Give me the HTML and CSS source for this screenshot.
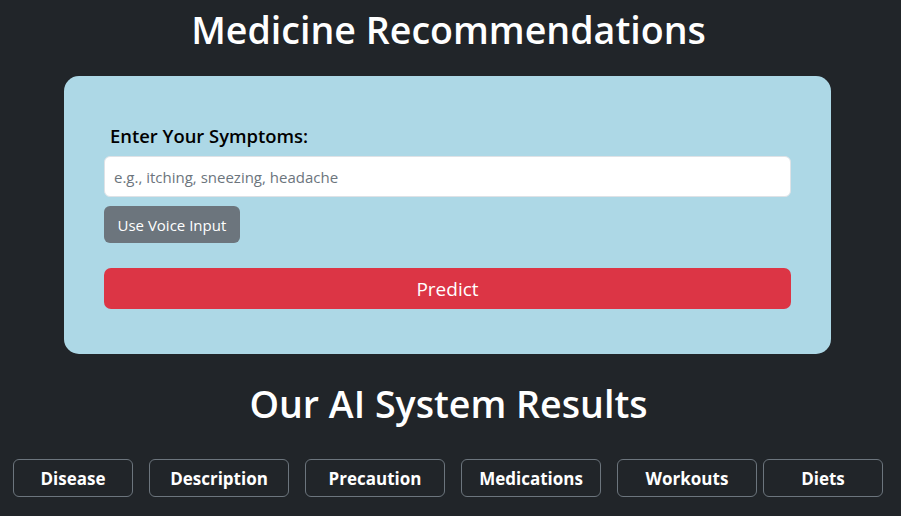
FILE: index.html
```html
<!DOCTYPE html>
<html lang="en">
<head>
<meta charset="utf-8">
<title>Medicine Recommendations</title>
<link rel="stylesheet" href="styles.css">
</head>
<body>
  <h1 class="title">Medicine Recommendations</h1>
  <div class="card">
    <form class="symptom-form">
      <label class="label" for="symptoms">Enter Your Symptoms:</label>
      <input class="input" id="symptoms" type="text" placeholder="e.g., itching, sneezing, headache">
      <button type="button" class="btn-voice">Use Voice Input</button>
      <button type="button" class="btn-predict">Predict</button>
    </form>
  </div>
  <h2 class="title results-title">Our AI System Results</h2>
  <div class="tabs">
    <button class="tab tab-sm">Disease</button>
    <button class="tab">Description</button>
    <button class="tab">Precaution</button>
    <button class="tab">Medications</button>
    <button class="tab">Workouts</button>
    <button class="tab tab-sm tab-last">Diets</button>
  </div>
</body>
</html>
```
FILE: styles.css
```css
* { box-sizing: border-box; }
html, body { margin: 0; padding: 0; }
body {
  background: #212529;
  color: #fff;
  font-family: "Open Sans", "Noto Sans", sans-serif;
  width: 901px;
  height: 516px;
  overflow: hidden;
}
.title {
  margin: 0;
  padding: 6px 4px 0 0;
  text-align: center;
  font-size: 37.6px;
  font-weight: 600;
  line-height: 48px;
}
.card {
  width: 767px;
  margin: 22px 0 0 64px;
  background: #add8e6;
  border-radius: 15px;
  padding: 46px 40px 45px;
}
.symptom-form {
  display: flex;
  flex-direction: column;
  align-items: flex-start;
}
.label {
  color: #000;
  font-size: 18.4px;
  font-weight: 600;
  line-height: 28px;
  padding-left: 6px;
  margin-bottom: 6px;
}
.input {
  width: 100%;
  height: 41px;
  border: 1px solid #dee2e6;
  border-radius: 6px;
  background: #fff;
  padding: 0 9px;
  font-family: inherit;
  font-size: 15px;
  color: #212529;
}
.input::placeholder { color: #6c757d; opacity: 1; }
.btn-voice {
  margin-top: 9px;
  height: 37px;
  padding: 0 13.5px;
  background: #6c757d;
  color: #fff;
  border: none;
  border-radius: 6px;
  font-family: inherit;
  font-size: 15px;
}
.btn-predict {
  margin-top: 25px;
  width: 100%;
  height: 41px;
  background: #dc3545;
  color: #fff;
  border: none;
  border-radius: 7px;
  font-family: inherit;
  font-size: 19px;
}
.results-title {
  margin-top: 26px;
  padding-top: 0;
}
.tabs {
  display: flex;
  gap: 16px;
  margin: 31px 0 0 13px;
}
.tab {
  width: 140px;
  height: 38px;
  background: transparent;
  border: 1px solid #6c757d;
  border-radius: 6px;
  color: #fff;
  font-family: inherit;
  font-size: 17px;
  font-weight: 700;
}
.tab-sm { width: 120px; }
.tab-last { margin-left: -10px; }
```
